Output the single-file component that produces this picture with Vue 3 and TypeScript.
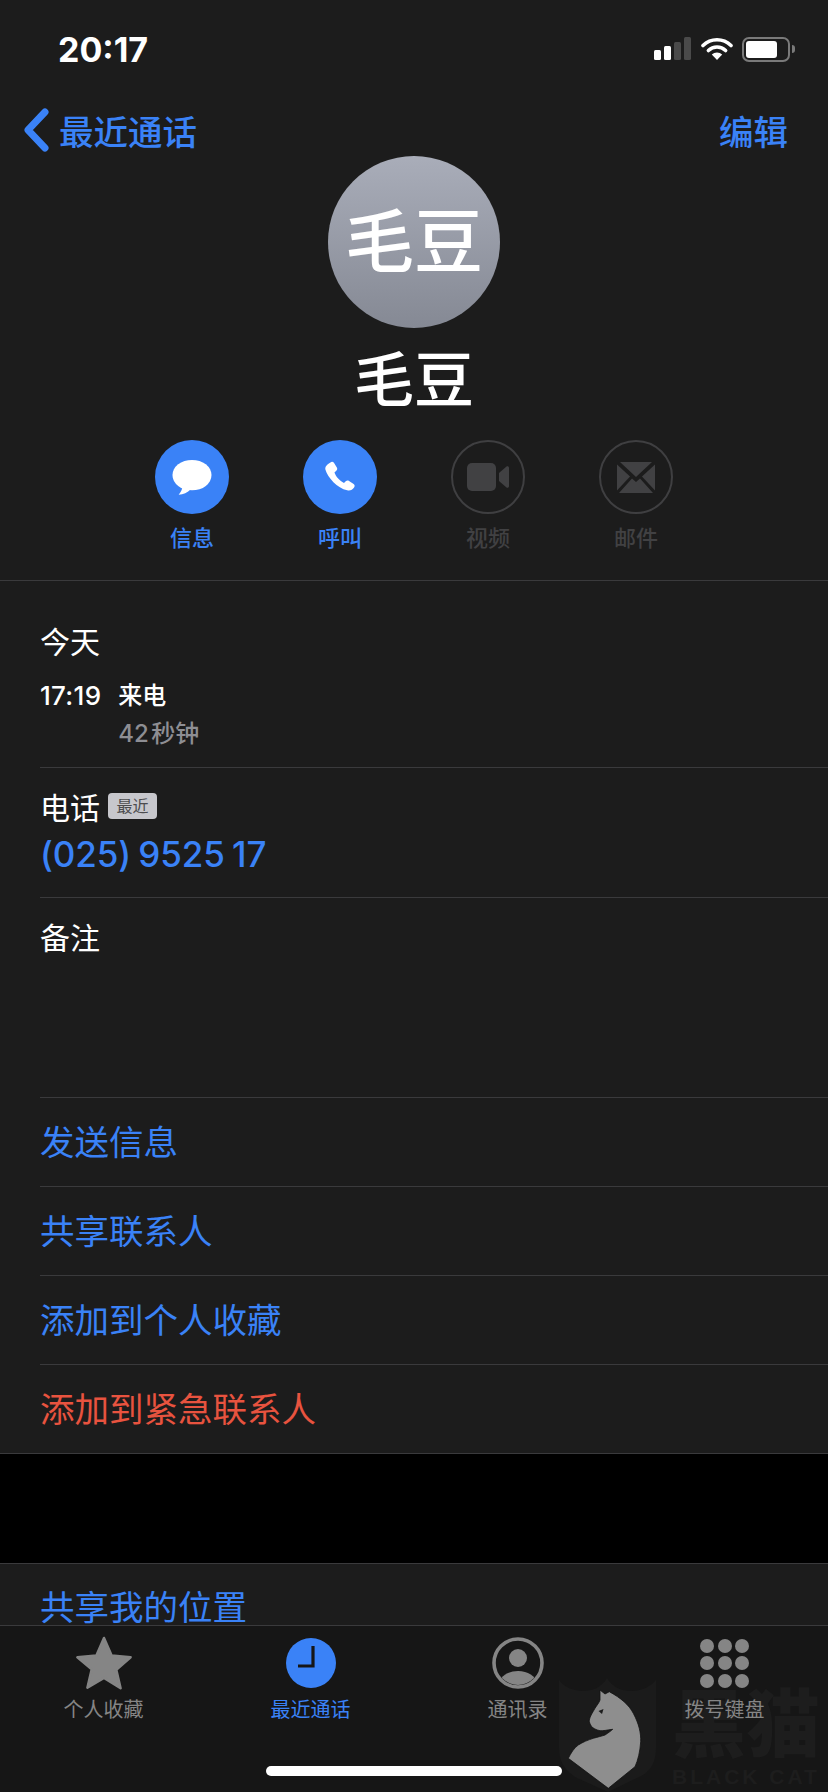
<script setup lang="ts">
// Contact detail screen of the iOS phone app, dark mode.
interface ActionBtn {
  label: string
  icon: string
  on: boolean
}

const actions: ActionBtn[] = [
  { label: '信息', icon: 'msg', on: true },
  { label: '呼叫', icon: 'phone', on: true },
  { label: '视频', icon: 'video', on: false },
  { label: '邮件', icon: 'mail', on: false },
]

const links = ['发送信息', '共享联系人', '添加到个人收藏']
const tabs = [
  { label: '个人收藏', icon: 'star' },
  { label: '最近通话', icon: 'clock' },
  { label: '通讯录', icon: 'person' },
  { label: '拨号键盘', icon: 'keypad' },
]
const dots = [0, 1, 2, 3, 4, 5, 6, 7, 8]
</script>

<template>
  <div class="phone">
    <div class="scroll">
      <header class="status">
        <span class="time">20:17</span>
        <div class="status-icons">
          <svg width="38" height="24" viewBox="0 0 38 24">
            <rect x="0" y="13" width="7" height="10" rx="1.5" fill="#fff" />
            <rect x="10" y="9" width="7" height="14" rx="1.5" fill="#fff" />
            <rect x="20" y="5" width="7" height="18" rx="1.5" fill="#4a4a4a" />
            <rect x="30" y="0" width="7" height="23" rx="1.5" fill="#4a4a4a" />
          </svg>
          <svg width="32" height="24" viewBox="0 0 32 24">
            <path d="M2 8.5a20 20 0 0 1 28 0" fill="none" stroke="#fff" stroke-width="3.6" stroke-linecap="round" />
            <path d="M7.4 13.5a12.4 12.4 0 0 1 17.2 0" fill="none" stroke="#fff" stroke-width="3.6" stroke-linecap="round" />
            <path d="M16 23l-5.2-5.4a7.4 7.4 0 0 1 10.4 0z" fill="#fff" />
          </svg>
          <div class="battery">
            <div class="battery-body"><div class="battery-fill"></div></div>
            <div class="battery-cap"></div>
          </div>
        </div>
      </header>

      <nav class="nav">
        <div class="back">
          <svg width="28" height="44" viewBox="0 0 28 44">
            <path d="M23 4L6 22l17 18" fill="none" stroke="#3a82f7" stroke-width="7" stroke-linecap="round" stroke-linejoin="round" />
          </svg>
          <span>最近通话</span>
        </div>
        <span class="edit">编辑</span>
      </nav>

      <section class="head">
        <div class="avatar">毛豆</div>
        <h1 class="name">毛豆</h1>
        <div class="actions">
          <div v-for="a in actions" :key="a.label" class="action" :class="{ off: !a.on }">
            <div class="circle">
              <svg v-if="a.icon === 'msg'" width="40" height="37" viewBox="0 0 42 38">
                <ellipse cx="21" cy="16.5" rx="20.5" ry="16" fill="#fff" />
                <path d="M11 27c0 4-1 7-4 10 5 0 9-2 13-6z" fill="#fff" />
              </svg>
              <svg v-else-if="a.icon === 'phone'" width="33" height="33" viewBox="0 0 36 36">
                <path d="M7 1.5c1.500-1 3-.7 4 .7l3 4.800c.8 1.300.5 2.600-.6 3.700l-2 1.800c1.700 4.600 5.700 9.200 10.400 11.400l1.900-1.700c1.100-1 2.400-1.100 3.600-.3l5 3.300c1.300.9 1.500 2.500.5 3.800-1.800 2.600-4.400 3.800-7.500 3C14.500 29.500 4 18 1.600 9.500.8 6 3.500 3.500 7 1.500z" fill="#fff" />
              </svg>
              <svg v-else-if="a.icon === 'video'" width="42" height="28" viewBox="0 0 42 28">
                <rect x="0" y="0" width="29" height="28" rx="5" fill="#414143" />
                <path d="M32 10l7.500-6.500c1-.8 2.500 0 2.500 1.200v18.600c0 1.200-1.500 2-2.500 1.200L32 18z" fill="#414143" />
              </svg>
              <svg v-else width="38" height="31" viewBox="0 0 38 31">
                <path d="M3 0h32L19 15z" fill="#414143" />
                <path d="M0 2.500v26L13 14.500z" fill="#414143" />
                <path d="M38 2.500v26L25 14.500z" fill="#414143" />
                <path d="M15 16.500l4 3.500 4-3.500L36 31H2z" fill="#414143" />
              </svg>
            </div>
            <span class="action-label">{{ a.label }}</span>
          </div>
        </div>
      </section>

      <section class="list">
        <div class="row recents">
          <div class="today">今天</div>
          <div class="call">
            <span class="call-time">17:19</span>
            <div>
              <div class="call-type">来电</div>
              <div class="call-len">42 秒钟</div>
            </div>
          </div>
        </div>
        <div class="row phone-row">
          <div class="phone-title">电话<span class="badge">最近</span></div>
          <div class="phone-num">(025) 9525 17</div>
        </div>
        <div class="row notes">备注</div>
        <div v-for="l in links" :key="l" class="row link">{{ l }}</div>
        <div class="row link danger">添加到紧急联系人</div>
      </section>

      <div class="gap"></div>
      <div class="share">共享我的位置</div>
    </div>

    <footer class="tabbar">
      <!-- watermark stamped on the tab bar, the labels stay readable above it -->
      <div class="mark">
        <svg width="98" height="114" viewBox="0 0 98 114">
          <path d="M0 2C10 16 38 18 48 0 58 18 86 16 97 2V70C97 88 88 96 78 100L49 114 18 100C8 94 0 86 0 70Z" fill="#1b1b1b" />
          <path d="M41 12L46 16 50.3 13.7C62 20 70 27 74.3 35.3 80 46 82 55 81.7 63.7 81 74 79 82 76 88.7L49.3 110.3 9.3 80.3C12 75 15 70 19.3 67 24 64 29 62 34.3 60.3 39 59 43 58 46 57 49 55 52 53 53.7 51.3 48 52 44 53 41 52.7 37 52 34 50 32.7 48.7 31 46 30 44 30.3 42 31 38 34 34 36 30.3 38 27 40 25 41 22Z" fill="#8e8e8e" stroke="#111" stroke-width="0.8" />
          <path d="M39.500 33l5-2-1.500 5z" fill="#1b1b1b" />
        </svg>
        <div class="mark-text">
          <div class="mark-cn">黑猫</div>
          <div class="mark-en">BLACK CAT</div>
        </div>
      </div>
      <div v-for="(t, i) in tabs" :key="t.label" class="tab" :class="{ active: i === 1 }">
        <div class="tab-icon">
          <svg v-if="t.icon === 'star'" width="56" height="54" viewBox="0 0 56 54">
            <path d="M28 2l7.600 17.400 19 1.800-14.300 12.500 4.300 18.500L28 42l-16.600 9.700 4.300-18.500L1.400 21.200l19-1.800z" fill="#858585" stroke="#858585" stroke-width="2.5" stroke-linejoin="round" />
          </svg>
          <svg v-else-if="t.icon === 'clock'" width="50" height="50" viewBox="0 0 50 50">
            <circle cx="25" cy="25" r="25" fill="#3a82f7" />
            <path d="M27 8v20H12" fill="none" stroke="#161616" stroke-width="3.2" />
          </svg>
          <svg v-else-if="t.icon === 'person'" width="52" height="52" viewBox="0 0 52 52">
            <defs>
              <clipPath id="ring"><circle cx="26" cy="26" r="22" /></clipPath>
            </defs>
            <circle cx="26" cy="26" r="24" fill="none" stroke="#858585" stroke-width="3.6" />
            <circle cx="26" cy="21" r="9" fill="#858585" />
            <ellipse cx="26" cy="46" rx="18" ry="12" fill="#858585" clip-path="url(#ring)" />
          </svg>
          <div v-else class="keypad">
            <span v-for="d in dots" :key="d"></span>
          </div>
        </div>
        <span class="tab-label">{{ t.label }}</span>
      </div>
      <div class="home-bar"></div>
    </footer>
  </div>
</template>

<style>
html,
body {
  margin: 0;
  background: #000;
}
</style>

<style scoped>
.phone {
  width: 828px;
  height: 1792px;
  display: flex;
  flex-direction: column;
  overflow: hidden;
  background: #1c1c1c;
  color: #fff;
  font-family: Inter, "Noto Sans CJK SC", sans-serif;
}
.scroll {
  flex: 1;
  min-height: 0;
  overflow: hidden;
}
.status {
  height: 88px;
  display: flex;
  justify-content: space-between;
  align-items: center;
  padding: 10px 33px 0 58px;
  box-sizing: border-box;
}
.time {
  font-size: 34px;
  font-weight: 700;
}
.status-icons {
  display: flex;
  align-items: center;
  gap: 9px;
}
.battery {
  display: flex;
  align-items: center;
  gap: 2px;
}
.battery-body {
  width: 48px;
  height: 25px;
  border: 2px solid #7a7a7a;
  border-radius: 7px;
  padding: 2px;
  box-sizing: border-box;
}
.battery-fill {
  width: 31px;
  height: 100%;
  background: #fff;
  border-radius: 3px;
}
.battery-cap {
  width: 3px;
  height: 8px;
  background: #7a7a7a;
  border-radius: 0 3px 3px 0;
}
.nav {
  height: 68px;
  box-sizing: border-box;
  display: flex;
  justify-content: space-between;
  align-items: center;
  padding: 16px 40px 0 22px;
  color: #3a82f7;
  font-size: 34.5px;
  font-weight: 500;
}
.back {
  display: flex;
  align-items: center;
  gap: 9px;
}
.head {
  display: flex;
  flex-direction: column;
  align-items: center;
  height: 424px;
  border-bottom: 1px solid #3a3a3c;
}
.avatar {
  width: 172px;
  height: 172px;
  border-radius: 50%;
  background: linear-gradient(#a9adb9, #858994);
  display: flex;
  align-items: center;
  justify-content: center;
  font-size: 69px;
  font-weight: 500;
  line-height: 1;
}
.name {
  margin: 14px 0 0;
  font-size: 60px;
  font-weight: 500;
  line-height: 76px;
}
.actions {
  display: flex;
  gap: 74px;
  margin-top: 22px;
}
.action {
  width: 74px;
  display: flex;
  flex-direction: column;
  align-items: center;
  color: #3a82f7;
}
.circle {
  width: 74px;
  height: 74px;
  border-radius: 50%;
  background: #3a82f7;
  display: flex;
  align-items: center;
  justify-content: center;
  box-sizing: border-box;
}
.action.off {
  color: #414143;
}
.action.off .circle {
  background: none;
  border: 2px solid #3f3f41;
}
.action-label {
  margin-top: 9px;
  font-size: 22px;
  font-weight: 500;
  line-height: 30px;
}
.list {
  padding-left: 40px;
}
.row {
  box-sizing: border-box;
  border-bottom: 1px solid #3a3a3c;
}
.recents {
  height: 187px;
  padding-top: 40px;
}
.today {
  font-size: 30px;
  line-height: 42px;
}
.call {
  display: flex;
  gap: 17px;
  margin-top: 16px;
}
.call-time {
  font-size: 26px;
  font-weight: 500;
  line-height: 34px;
  letter-spacing: 0.3px;
}
.call-type {
  font-size: 24px;
  font-weight: 500;
  line-height: 34px;
}
.call-len {
  margin-top: 4px;
  font-size: 24px;
  font-weight: 500;
  line-height: 34px;
  word-spacing: -4px;
  color: #8e8e93;
}
.phone-row {
  height: 130px;
  padding-top: 19px;
}
.phone-title {
  display: flex;
  align-items: center;
  font-size: 30px;
  line-height: 42px;
}
.badge {
  display: inline-flex;
  align-items: center;
  justify-content: center;
  width: 49px;
  height: 26px;
  margin: -5px 0 0 8px;
  border-radius: 4px;
  background: #c7c7cc;
  color: #4c4c4e;
  font-size: 16px;
  line-height: 1;
}
.phone-num {
  margin-top: 2px;
  font-size: 35px;
  font-weight: 500;
  line-height: 46px;
  letter-spacing: -0.1px;
  word-spacing: -2px;
  color: #3a82f7;
}
.notes {
  height: 200px;
  padding-top: 19px;
  font-size: 30px;
  line-height: 42px;
}
.link {
  height: 89px;
  padding-bottom: 4px;
  display: flex;
  align-items: center;
  font-size: 34.5px;
  color: #3a82f7;
}
.danger {
  margin-left: -40px;
  padding-left: 40px;
  color: #e8533f;
}
.gap {
  height: 109px;
  background: #000;
  border-bottom: 1px solid #3a3a3c;
}
.share {
  padding: 27px 0 0 40px;
  font-size: 34.5px;
  line-height: 34px;
  color: #3a82f7;
}
.tabbar {
  position: relative;
  height: 167px;
  flex: none;
  display: flex;
  box-sizing: border-box;
  padding-top: 8px;
  overflow: hidden;
  background: #161616;
  border-top: 1px solid #3a3a3c;
}
.tab {
  position: relative;
  width: 25%;
  display: flex;
  flex-direction: column;
  align-items: center;
  color: #858585;
}
.tab.active {
  color: #3a82f7;
}
.tab-icon {
  height: 58px;
  display: flex;
  align-items: center;
  justify-content: center;
}
.tab-label {
  margin-top: 3px;
  font-size: 20px;
  line-height: 30px;
}
.keypad {
  display: grid;
  grid-template-columns: repeat(3, 14px);
  gap: 3.5px;
}
.keypad span {
  width: 14px;
  height: 14px;
  border-radius: 50%;
  background: #858585;
}
.home-bar {
  position: absolute;
  left: 266px;
  top: 140px;
  width: 296px;
  height: 10px;
  border-radius: 5px;
  background: #fff;
}
.mark {
  position: absolute;
  left: 559px;
  top: 52px;
  display: flex;
  gap: 15px;
}
.mark-text {
  color: #1d1d1d;
  margin-top: 4px;
}
.mark-cn {
  font-size: 74px;
  font-weight: 900;
  line-height: 74px;
  font-family: "Noto Sans CJK SC", sans-serif;
}
.mark-en {
  margin-top: 9px;
  font-family: "Liberation Sans", sans-serif;
  font-weight: 700;
  font-size: 21px;
  letter-spacing: 3px;
  line-height: 24px;
  white-space: nowrap;
}
</style>
